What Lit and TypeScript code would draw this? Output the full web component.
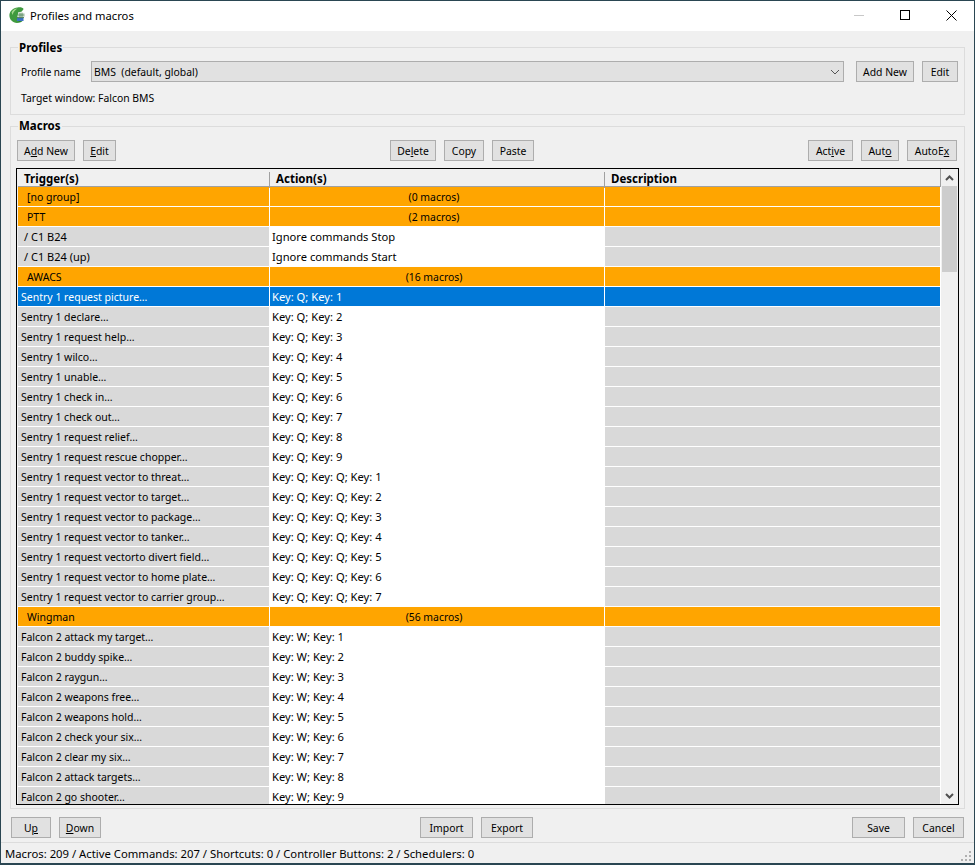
import { LitElement, html, css, svg } from 'lit';
import { customElement } from 'lit/decorators.js';

type Row =
  | { kind: 'group'; name: string; count: string }
  | { kind: 'macro'; trigger: string; action: string; selected?: boolean; indent?: boolean }

const macro = (trigger: string, action: string, selected = false): Row => ({ kind: 'macro', trigger, action, selected })

const rows: Row[] = [
  { kind: 'group', name: '[no group]', count: '(0 macros)' },
  { kind: 'group', name: 'PTT', count: '(2 macros)' },
  { kind: 'macro', trigger: '/ C1 B24', action: 'Ignore commands Stop', indent: true },
  { kind: 'macro', trigger: '/ C1 B24 (up)', action: 'Ignore commands Start', indent: true },
  { kind: 'group', name: 'AWACS', count: '(16 macros)' },
  macro('Sentry 1 request picture…', 'Key: Q; Key: 1', true),
  macro('Sentry 1 declare…', 'Key: Q; Key: 2'),
  macro('Sentry 1 request help…', 'Key: Q; Key: 3'),
  macro('Sentry 1 wilco…', 'Key: Q; Key: 4'),
  macro('Sentry 1 unable…', 'Key: Q; Key: 5'),
  macro('Sentry 1 check in…', 'Key: Q; Key: 6'),
  macro('Sentry 1 check out…', 'Key: Q; Key: 7'),
  macro('Sentry 1 request relief…', 'Key: Q; Key: 8'),
  macro('Sentry 1 request rescue chopper…', 'Key: Q; Key: 9'),
  macro('Sentry 1 request vector to threat…', 'Key: Q; Key: Q; Key: 1'),
  macro('Sentry 1 request vector to target…', 'Key: Q; Key: Q; Key: 2'),
  macro('Sentry 1 request vector to package…', 'Key: Q; Key: Q; Key: 3'),
  macro('Sentry 1 request vector to tanker…', 'Key: Q; Key: Q; Key: 4'),
  macro('Sentry 1 request vectorto divert field…', 'Key: Q; Key: Q; Key: 5'),
  macro('Sentry 1 request vector to home plate…', 'Key: Q; Key: Q; Key: 6'),
  macro('Sentry 1 request vector to carrier group…', 'Key: Q; Key: Q; Key: 7'),
  { kind: 'group', name: 'Wingman', count: '(56 macros)' },
  macro('Falcon 2 attack my target…', 'Key: W; Key: 1'),
  macro('Falcon 2 buddy spike…', 'Key: W; Key: 2'),
  macro('Falcon 2 raygun…', 'Key: W; Key: 3'),
  macro('Falcon 2 weapons free…', 'Key: W; Key: 4'),
  macro('Falcon 2 weapons hold…', 'Key: W; Key: 5'),
  macro('Falcon 2 check your six…', 'Key: W; Key: 6'),
  macro('Falcon 2 clear my six…', 'Key: W; Key: 7'),
  macro('Falcon 2 attack targets…', 'Key: W; Key: 8'),
  macro('Falcon 2 go shooter…', 'Key: W; Key: 9'),
]

// label with the mnemonic letter underlined, index -1 means none
const btn = (label: string, mnemonic: number, width: number) => html`
  <button class="btn" style="width:${width}px">${mnemonic < 0 ? label : html`${label.slice(0, mnemonic)}<u>${label[mnemonic]}</u>${label.slice(mnemonic + 1)}`}</button>`

const appIcon = svg`<svg class="app-icon" width="16" height="16" viewBox="0 0 16 16">
  <path d="M8.5 .4C11.5 0 14 .6 14.6 2L12.8 4.6 9.4 5.6 8 11.5 12 12.2 14.4 13C13 15 10.6 16 8 16 3.6 15.8 .2 12.4 .4 8 .6 4 4.2 .8 8.5 .4Z" fill="#3f9a3f"/>
  <path d="M2.6 5.4C3.6 3 6 1.6 8.4 1.6 6 3.2 4.4 5 3.6 8Z" fill="#a5d98f"/>
  <path d="M9 15C11 15 12.6 14.4 13.4 13.4L11 13C10.4 14 9.6 14.6 9 15Z" fill="#2c7a34"/>
  <rect x="9" y="5.6" width="6.5" height="4.6" fill="#f2f6f2"/>
  <path d="M9 7.2h6.5M9 8.8h6.5M11 5.6v4.6M13 5.6v4.6" stroke="#2d6b35" stroke-width=".6"/>
  <rect x="8" y="11" width="6.5" height="3" fill="#3d73c4"/>
  <path d="M8 10.6h7" stroke="#1e5a2a" stroke-width=".8"/>
</svg>`

@customElement('app-root')
export class AppRoot extends LitElement {

  static styles = css`
    :host {
      display: block;
      width: 975px;
      height: 865px;
      font-family: "Noto Sans", sans-serif;
      font-size: 10.4px;
      color: #000;
    }

    * { box-sizing: border-box; }

    .window {
      width: 975px;
      height: 865px;
      display: flex;
      flex-direction: column;
      background: #f0f0f0;
      border: 1px solid #2a4652;
      border-bottom-width: 2px;
    }

    .titlebar {
      height: 30px;
      flex: none;
      background: #fff;
      display: flex;
      align-items: center;
      padding-left: 8px;
      gap: 5px;
      font-size: 11.2px;
    }
    .app-icon { margin-bottom: 2px; }
    .titlebar .title { flex: 1; padding-bottom: 2px; }
    .winbtn { width: 46px; height: 30px; padding-bottom: 2px; display: flex; align-items: center; justify-content: center; }
    .winbtns { display: flex; }

    .content {
      flex: 1;
      min-height: 0;
      display: flex;
      flex-direction: column;
      padding: 0 9px;
    }

    fieldset {
      margin: 0;
      border: 1px solid #dcdcdc;
      min-width: 0;
    }
    legend {
      font-weight: 700;
      font-size: 11.5px;
      padding: 0 1px;
      line-height: 15px;
    }

    .profiles {
      height: 75px;
      margin-top: 9px;
      padding: 0 6px 0 10px;
    }
    .profiles legend { margin-left: -3px; }
    .profile-row { display: flex; align-items: center; height: 21px; margin-top: 6px; }
    .profile-row .lbl { width: 70px; flex: none; font-size: 10px; }
    .combo {
      flex: 1;
      height: 21px;
      background: #e1e1e1;
      border: 1px solid #adadad;
      display: flex;
      align-items: center;
      justify-content: space-between;
      padding: 0 3px 0 2px;
      margin-right: 12px;
      white-space: pre;
    }
    .profile-row .btn + .btn { margin-left: 8px; }
    .target { margin-top: 9px; line-height: 15px; }

    .btn {
      height: 21px;
      padding: 0;
      margin: 0;
      font: inherit;
      color: #000;
      background: #e1e1e1;
      border: 1px solid #adadad;
      flex: none;
      white-space: nowrap;
    }

    .macros {
      margin-top: 3px;
      height: 691px;
      padding: 0 7px 0 6px;
      display: flex;
      flex-direction: column;
    }
    .macros legend { margin-left: 1px; padding-bottom: 2px; }
    .toolbar {
      display: grid;
      grid-template-columns: 373px auto 1fr;
      height: 21px;
      margin-top: 5px;
      flex: none;
    }
    .tools { display: flex; gap: 8px; }
    .tools.end { justify-content: flex-end; }

    .table {
      margin: 7px -2px 0 -1px;
      height: 637px;
      flex: none;
      border: 1px solid #000;
      background: #fff;
      display: flex;
      overflow: hidden;
    }
    .grid { flex: 1; min-width: 0; border-left: 1px solid #f0f0f0; }
    .head {
      display: grid;
      grid-template-columns: 251px 335px 1fr;
      height: 18px;
      background: #f0f0f0;
      border-bottom: 1px solid #a0a0a0;
      border-right: 1px solid #a0a0a0;
      font-weight: 700;
      font-size: 11.5px;
      line-height: 19px;
    }
    .head div { padding-left: 6px; position: relative; }
    .head div + div { padding-left: 7px; }
    .head div + div::before {
      content: "";
      position: absolute;
      left: 0;
      top: 3px;
      bottom: 0;
      width: 1px;
      background: #a0a0a0;
    }

    .row {
      display: grid;
      grid-template-columns: 251px 335px 1fr;
      height: 20px;
      padding-right: 1px;
      border-bottom: 1px solid #fff;
      line-height: 19px;
    }
    .row > div { padding-left: 3px; white-space: nowrap; overflow: hidden; }
    .row > div + div { border-left: 1px solid #fff; }
    .row .trigger { background: #d9d9d9; font-size: 10.5px; line-height: 21px; }
    .row .desc { background: #d9d9d9; }
    .row .action { background: #fff; padding-left: 2px; font-size: 11.2px; }
    .row.indent .trigger { padding-left: 6px; font-size: 11px; line-height: 19px; }

    .row.group > div { background: #ffa500; }
    .row.group .trigger { padding-left: 9px; }
    .row.group .action { text-align: center; font-size: 10.4px; line-height: 21px; padding: 0 6px 0 0; }

    .row.selected > div { background: #0078d7; color: #fff; }

    .scrollbar {
      width: 17px;
      flex: none;
      background: #f0f0f0;
      display: flex;
      flex-direction: column;
    }
    .arrow { height: 17px; flex: none; display: flex; align-items: center; justify-content: center; }
    .track { flex: 1; padding: 0 1px; }
    .thumb { height: 86px; background: #cdcdcd; }

    .actions {
      display: grid;
      grid-template-columns: 409px auto 1fr;
      margin-top: 8px;
      padding: 0 1px;
      height: 21px;
      flex: none;
    }

    .statusbar {
      flex: none;
      height: 21px;
      border-top: 1px solid #dcdcdc;
      padding-left: 4px;
      line-height: 22px;
      font-size: 11.3px;
      position: relative;
    }
    .grip { position: absolute; right: 2px; bottom: 1px; }
  `

  private renderRow(r: Row) {
    if (r.kind === 'group') {
      return html`<div class="row group">
        <div class="trigger">${r.name}</div><div class="action">${r.count}</div><div class="desc"></div>
      </div>`
    }
    return html`<div class="row ${r.selected ? 'selected' : ''} ${r.indent ? 'indent' : ''}">
      <div class="trigger">${r.trigger}</div><div class="action">${r.action}</div><div class="desc"></div>
    </div>`
  }

  render() {
    return html`
    <div class="window">
      <div class="titlebar">
        ${appIcon}
        <span class="title">Profiles and macros</span>
        <div class="winbtns">
          <div class="winbtn"><svg width="10" height="10"><path d="M0 5.5h10" stroke="#c8c8c8"/></svg></div>
          <div class="winbtn"><svg width="10" height="10"><rect x=".5" y=".5" width="9" height="9" fill="none" stroke="#000"/></svg></div>
          <div class="winbtn"><svg width="11" height="11"><path d="M.5 .5l10 10M10.5 .5l-10 10" stroke="#000" fill="none"/></svg></div>
        </div>
      </div>
      <div class="content">
        <fieldset class="profiles">
          <legend>Profiles</legend>
          <div class="profile-row">
            <span class="lbl">Profile name</span>
            <div class="combo"><span>BMS  (default, global)</span>
              <svg width="10" height="6"><path d="M1 1l4 4 4-4" fill="none" stroke="#555"/></svg>
            </div>
            ${btn('Add New', -1, 58)}${btn('Edit', -1, 36)}
          </div>
          <div class="target">Target window: Falcon BMS</div>
        </fieldset>

        <fieldset class="macros">
          <legend>Macros</legend>
          <div class="toolbar">
            <div class="tools">${btn('Add New', 1, 58)}${btn('Edit', 0, 33)}</div>
            <div class="tools">${btn('Delete', 2, 46)}${btn('Copy', -1, 40)}${btn('Paste', -1, 42)}</div>
            <div class="tools end">${btn('Active', 3, 45)}${btn('Auto', 3, 38)}${btn('AutoEx', 5, 50)}</div>
          </div>
          <div class="table">
            <div class="grid">
              <div class="head"><div>Trigger(s)</div><div>Action(s)</div><div>Description</div></div>
              ${rows.map((r) => this.renderRow(r))}
            </div>
            <div class="scrollbar">
              <div class="arrow"><svg width="9" height="6"><path d="M1 5l3.5-3.5L8 5" fill="none" stroke="#505050" stroke-width="2"/></svg></div>
              <div class="track"><div class="thumb"></div></div>
              <div class="arrow"><svg width="9" height="6"><path d="M1 1l3.5 3.5L8 1" fill="none" stroke="#505050" stroke-width="2"/></svg></div>
            </div>
          </div>
        </fieldset>

        <div class="actions">
          <div class="tools">${btn('Up', 1, 40)}${btn('Down', 0, 42)}</div>
          <div class="tools">${btn('Import', -1, 53)}${btn('Export', -1, 52)}</div>
          <div class="tools end">${btn('Save', -1, 53)}${btn('Cancel', -1, 51)}</div>
        </div>
      </div>
      <div class="statusbar">Macros: 209 / Active Commands: 207 / Shortcuts: 0 / Controller Buttons: 2 / Schedulers: 0
        <svg class="grip" width="11" height="11" fill="#b0b0b0">
          <rect x="8" y="0" width="2" height="2"/><rect x="4" y="4" width="2" height="2"/><rect x="8" y="4" width="2" height="2"/>
          <rect x="0" y="8" width="2" height="2"/><rect x="4" y="8" width="2" height="2"/><rect x="8" y="8" width="2" height="2"/>
        </svg>
      </div>
    </div>`
  }
}
